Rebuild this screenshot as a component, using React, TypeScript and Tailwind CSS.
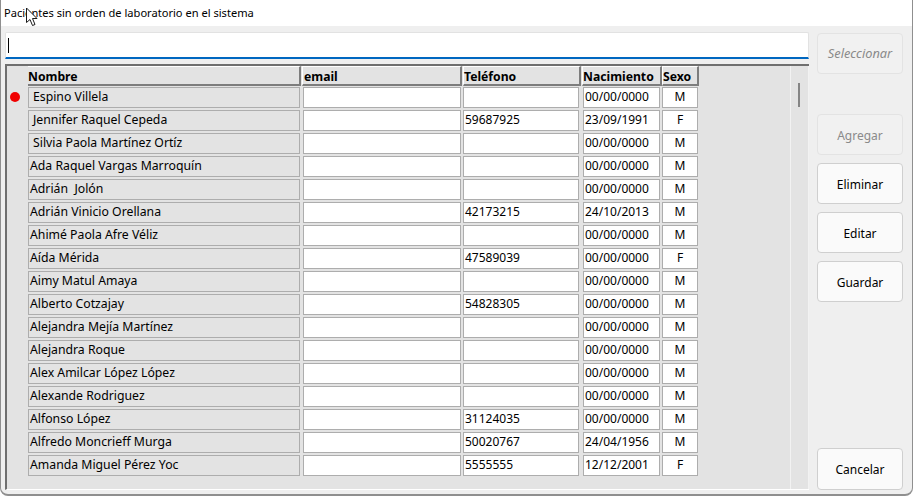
const rows = [
  { name: "Espino Villela", tel: "", date: "00/00/0000", sex: "M", indent: "pl-[4px]", mark: true },
  { name: "Jennifer Raquel Cepeda", tel: "59687925", date: "23/09/1991", sex: "F", indent: "pl-[4px]" },
  { name: "Silvia Paola Martínez Ortíz", tel: "", date: "00/00/0000", sex: "M", indent: "pl-[4px]" },
  { name: "Ada Raquel Vargas Marroquín", tel: "", date: "00/00/0000", sex: "M" },
  { name: "Adrián  Jolón", tel: "", date: "00/00/0000", sex: "M" },
  { name: "Adrián Vinicio Orellana", tel: "42173215", date: "24/10/2013", sex: "M" },
  { name: "Ahimé Paola Afre Véliz", tel: "", date: "00/00/0000", sex: "M" },
  { name: "Aída Mérida", tel: "47589039", date: "00/00/0000", sex: "F" },
  { name: "Aimy Matul Amaya", tel: "", date: "00/00/0000", sex: "M" },
  { name: "Alberto Cotzajay", tel: "54828305", date: "00/00/0000", sex: "M" },
  { name: "Alejandra Mejía Martínez", tel: "", date: "00/00/0000", sex: "M" },
  { name: "Alejandra Roque", tel: "", date: "00/00/0000", sex: "M" },
  { name: "Alex Amilcar López López", tel: "", date: "00/00/0000", sex: "M" },
  { name: "Alexande Rodriguez", tel: "", date: "00/00/0000", sex: "M" },
  { name: "Alfonso López", tel: "31124035", date: "00/00/0000", sex: "M" },
  { name: "Alfredo Moncrieff Murga", tel: "50020767", date: "24/04/1956", sex: "M" },
  { name: "Amanda Miguel Pérez Yoc", tel: "5555555", date: "12/12/2001", sex: "F" },
];

function Header({ label, className }: { label: string; className: string }) {
  return (
    <div className={`h-[20px] shrink-0 border-t border-t-white border-l-white border-r-2 border-b-2 border-r-[#7d7d7d] border-b-[#7d7d7d] bg-[#e3e3e3] text-[12.2px] font-bold leading-[20px] text-black ${className}`}>
      {label}
    </div>
  );
}

function Cell({ children, className }: { children?: React.ReactNode; className: string }) {
  return (
    <div className={`h-[21px] shrink-0 overflow-hidden whitespace-pre border-[1px] border-[#adadad] leading-[18px] text-black ${className}`}>
      {children}
    </div>
  );
}

function ActionButton({ label, disabled, italic, className = "" }: { label: string; disabled?: boolean; italic?: boolean; className?: string }) {
  return (
    <button
      className={`w-[86px] rounded-[4px] border ${
        disabled ? "border-[#e3e3e3] bg-[#f1f1f1] text-[#8a8a8a]" : "border-[#cfcfcf] bg-[#fafafa] text-black"
      } ${italic ? "text-[12.8px] italic" : "pt-[2px] text-[12px]"} ${className}`}
    >
      {label}
    </button>
  );
}

export default function App() {
  return (
    <div className="relative flex h-[496px] w-[913px] flex-col overflow-hidden rounded-b-[8px] border-x border-b-2 border-[#8f8f8f] bg-[#efefef] font-['Noto_Sans','Liberation_Sans',sans-serif]">
      <div className="flex h-[26px] shrink-0 items-center bg-white pl-[3px] text-[11.1px] text-black">
        Pacientes sin orden de laboratorio en el sistema
      </div>

      <div className="flex min-h-0 flex-1">
        <div className="ml-[4px] flex w-[804px] shrink-0 flex-col pt-[6px]">
          <div className="flex h-[27px] shrink-0 items-center rounded-t-[2px] border-x border-t border-[#e2e2e2] border-b-2 border-b-[#0067c0] bg-white pl-[2px]">
            <div className="h-[15px] w-px bg-black" />
          </div>

          <div className="mb-[4px] mt-[5px] flex min-h-0 flex-1 border-t-2 border-l-2 border-b border-[#6f6f6f] border-b-white bg-[#e3e3e3]">
            <div className="relative flex-1 pl-[21px]">
              <div className="flex gap-px">
                <Header label="Nombre" className="w-[273px]" />
                <Header label="email" className="w-[160px] border-l pl-px" />
                <Header label="Teléfono" className="w-[118px] border-l" />
                <Header label="Nacimiento" className="w-[80px] border-l" />
                <Header label="Sexo" className="-ml-px w-[37px] border-l" />
              </div>
              <div className="mt-px flex flex-col gap-[2px]">
                {rows.map((row) => (
                  <div key={row.name} className="relative flex">
                    {row.mark && <div className="absolute -left-[18px] top-[5px] size-[10px] rounded-full bg-[#f00000]" />}
                    <Cell className={`w-[272px] bg-[#e3e3e3] text-[12.25px] ${row.indent ?? "pl-px"}`}>{row.name}</Cell>
                    <Cell className="ml-[3px] w-[158px] bg-white text-[12px]" />
                    <Cell className="ml-[2px] w-[116px] bg-white pl-px text-[12px]">{row.tel}</Cell>
                    <Cell className="ml-[4px] w-[77px] bg-white pl-px text-[12px]">{row.date}</Cell>
                    <Cell className="ml-[2px] w-[36px] bg-white text-center text-[12px]">{row.sex}</Cell>
                  </div>
                ))}
              </div>
            </div>
            <div className="w-[19px] shrink-0 border-x border-[#f2f2f2] pl-[7px] pt-[17px]">
              <div className="h-[24px] w-[2px] bg-[#858585]" />
            </div>
          </div>
        </div>

        <div className="ml-[8px] flex w-[86px] shrink-0 flex-col pt-[7px] pb-[4px]">
          <ActionButton label="Seleccionar" disabled italic className="h-[41px]" />
          <ActionButton label="Agregar" disabled className="mt-[40px] h-[41px]" />
          <ActionButton label="Eliminar" className="mt-[8px] h-[41px]" />
          <ActionButton label="Editar" className="mt-[8px] h-[41px]" />
          <ActionButton label="Guardar" className="mt-[8px] h-[41px]" />
          <ActionButton label="Cancelar" className="mt-auto h-[42px]" />
        </div>
      </div>

      <svg className="absolute left-[24px] top-[7px]" width="14" height="20" viewBox="0 0 14 20">
        <path d="M1.5 1 L1.5 15.5 L5 12.5 L7.5 18.5 L10 17.5 L7.5 11.5 L12 11.5 Z" fill="white" stroke="#1a1a1a" strokeWidth="1" />
      </svg>
    </div>
  );
}
